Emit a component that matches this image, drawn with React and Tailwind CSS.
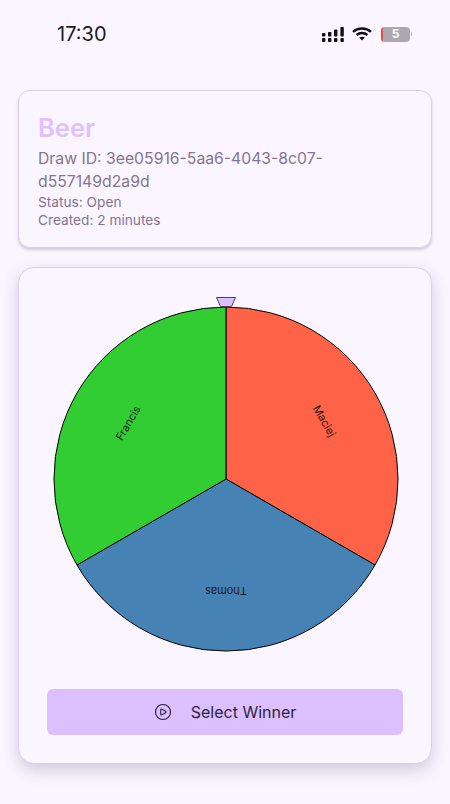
import { CirclePlay } from 'lucide-react';

const FONT = "font-['Inter','Noto_Sans',sans-serif]";

function StatusBar() {
    return (
        <div className="h-[68px] pl-[57px] pr-[38px] pt-[21px] flex justify-between items-start">
            <span className="text-[20px] leading-[26px] text-[#1a1a1f] font-normal">17:30</span>
            <div className="flex items-center gap-[8px] h-[24px] mt-[1px]">
                <svg width="22" height="15" viewBox="0 0 22 15" fill="#111">
                    <rect x="0" y="6" width="3.4" height="3.6" rx="0.8" />
                    <rect x="0" y="11" width="3.4" height="4" rx="0.8" />
                    <rect x="6" y="5" width="3.4" height="4.6" rx="0.8" />
                    <rect x="6" y="11" width="3.4" height="4" rx="0.8" />
                    <rect x="12" y="2.5" width="3.4" height="7.1" rx="0.8" />
                    <rect x="12" y="11" width="3.4" height="4" rx="0.8" />
                    <rect x="18.4" y="0" width="3.4" height="9.6" rx="0.8" />
                    <rect x="18.4" y="11" width="3.4" height="4" rx="0.8" />
                </svg>
                <svg width="20" height="14" viewBox="0 0 20 14" fill="none" stroke="#111" strokeWidth="2.4">
                    <path d="M1 4.8 C6 0.4 14 0.4 19 4.8" />
                    <path d="M4.6 8 C7.6 5.4 12.4 5.4 15.4 8" />
                    <path d="M10 13.6 L7.2 10.6 C8.8 9.4 11.2 9.4 12.8 10.6 Z" fill="#111" stroke="none" />
                </svg>
                <div className="flex items-center ml-[1px]">
                    <div className="relative w-[29px] h-[15px] rounded-[4px] bg-[#aca8ae] overflow-hidden flex items-center justify-center">
                        <div className="absolute left-0 top-0 bottom-0 w-[1.5px] bg-[#e0514a]" />
                        <span className="text-[12px] leading-none font-bold text-white">5</span>
                    </div>
                    <div className="w-[1px] h-[4px] ml-[1px] rounded-r bg-[#aca8ae]" />
                </div>
            </div>
        </div>
    );
}

function Wheel() {
    return (
        <svg width="348" height="358" viewBox="0 0 348 358" className="block">
            <path d="M174 184 L174 12 A172 172 0 0 1 323 270 Z" fill="#ff6347" stroke="#000" strokeWidth="1" />
            <path d="M174 184 L323 270 A172 172 0 0 1 25 270 Z" fill="#4682b4" stroke="#000" strokeWidth="1" />
            <path d="M174 184 L25 270 A172 172 0 0 1 174 12 Z" fill="#32cd32" stroke="#000" strokeWidth="1" />
            <path d="M164.5 2.5 H183.5 L179.5 11.5 H168.5 Z" fill="#dcbfff" stroke="#4b4458" strokeWidth="1" />
            <g fontSize="11" fill="#1a1a1f" textAnchor="middle" dominantBaseline="central">
                <text transform="translate(76 128) rotate(-60)">Francis</text>
                <text transform="translate(272.5 126) rotate(60)">Maciej</text>
                <text transform="translate(174 296) rotate(180)">Thomas</text>
            </g>
        </svg>
    );
}

export default function App() {
    return (
        <div className={`w-[450px] h-[804px] overflow-hidden bg-[#fbf5ff] ${FONT}`}>
            <StatusBar />
            <div className="mt-[22px] mx-[18px] flex flex-col gap-[19px]">
                <div className="h-[158px] rounded-[12px] border border-[#dcd0e8] bg-[#fbf5ff] px-[19px] pt-[19px] shadow-[0_2px_3px_rgba(70,50,100,0.22)]">
                    <h1 className="text-[25.5px] leading-[36px] font-semibold text-[#dfc1ff]">Beer</h1>
                    <p className="mt-[1px] text-[15.75px] leading-[23px] text-[#83758f]">
                        Draw ID: 3ee05916-5aa6-4043-8c07-
                        <br />
                        d557149d2a9d
                    </p>
                    <p className="text-[13.7px] leading-[18px] text-[#83758f]">Status: Open</p>
                    <p className="text-[13.7px] leading-[18px] text-[#83758f]">Created: 2 minutes</p>
                </div>
                <div className="h-[497px] rounded-[16px] border border-[#dcd0e8] bg-[#fbf5ff] shadow-[0_6px_16px_rgba(70,50,100,0.22)] px-[28px]">
                    <div className="flex justify-center pt-[27px] pl-[2px]">
                        <Wheel />
                    </div>
                    <button className="mt-[36px] w-full h-[46px] rounded-[6px] bg-[#dcbfff] flex items-center justify-center gap-[19px] text-[16px] text-[#2f1f42]">
                        <CirclePlay size={18} strokeWidth={1.5} />
                        <span>Select Winner</span>
                    </button>
                </div>
            </div>
        </div>
    );
}
